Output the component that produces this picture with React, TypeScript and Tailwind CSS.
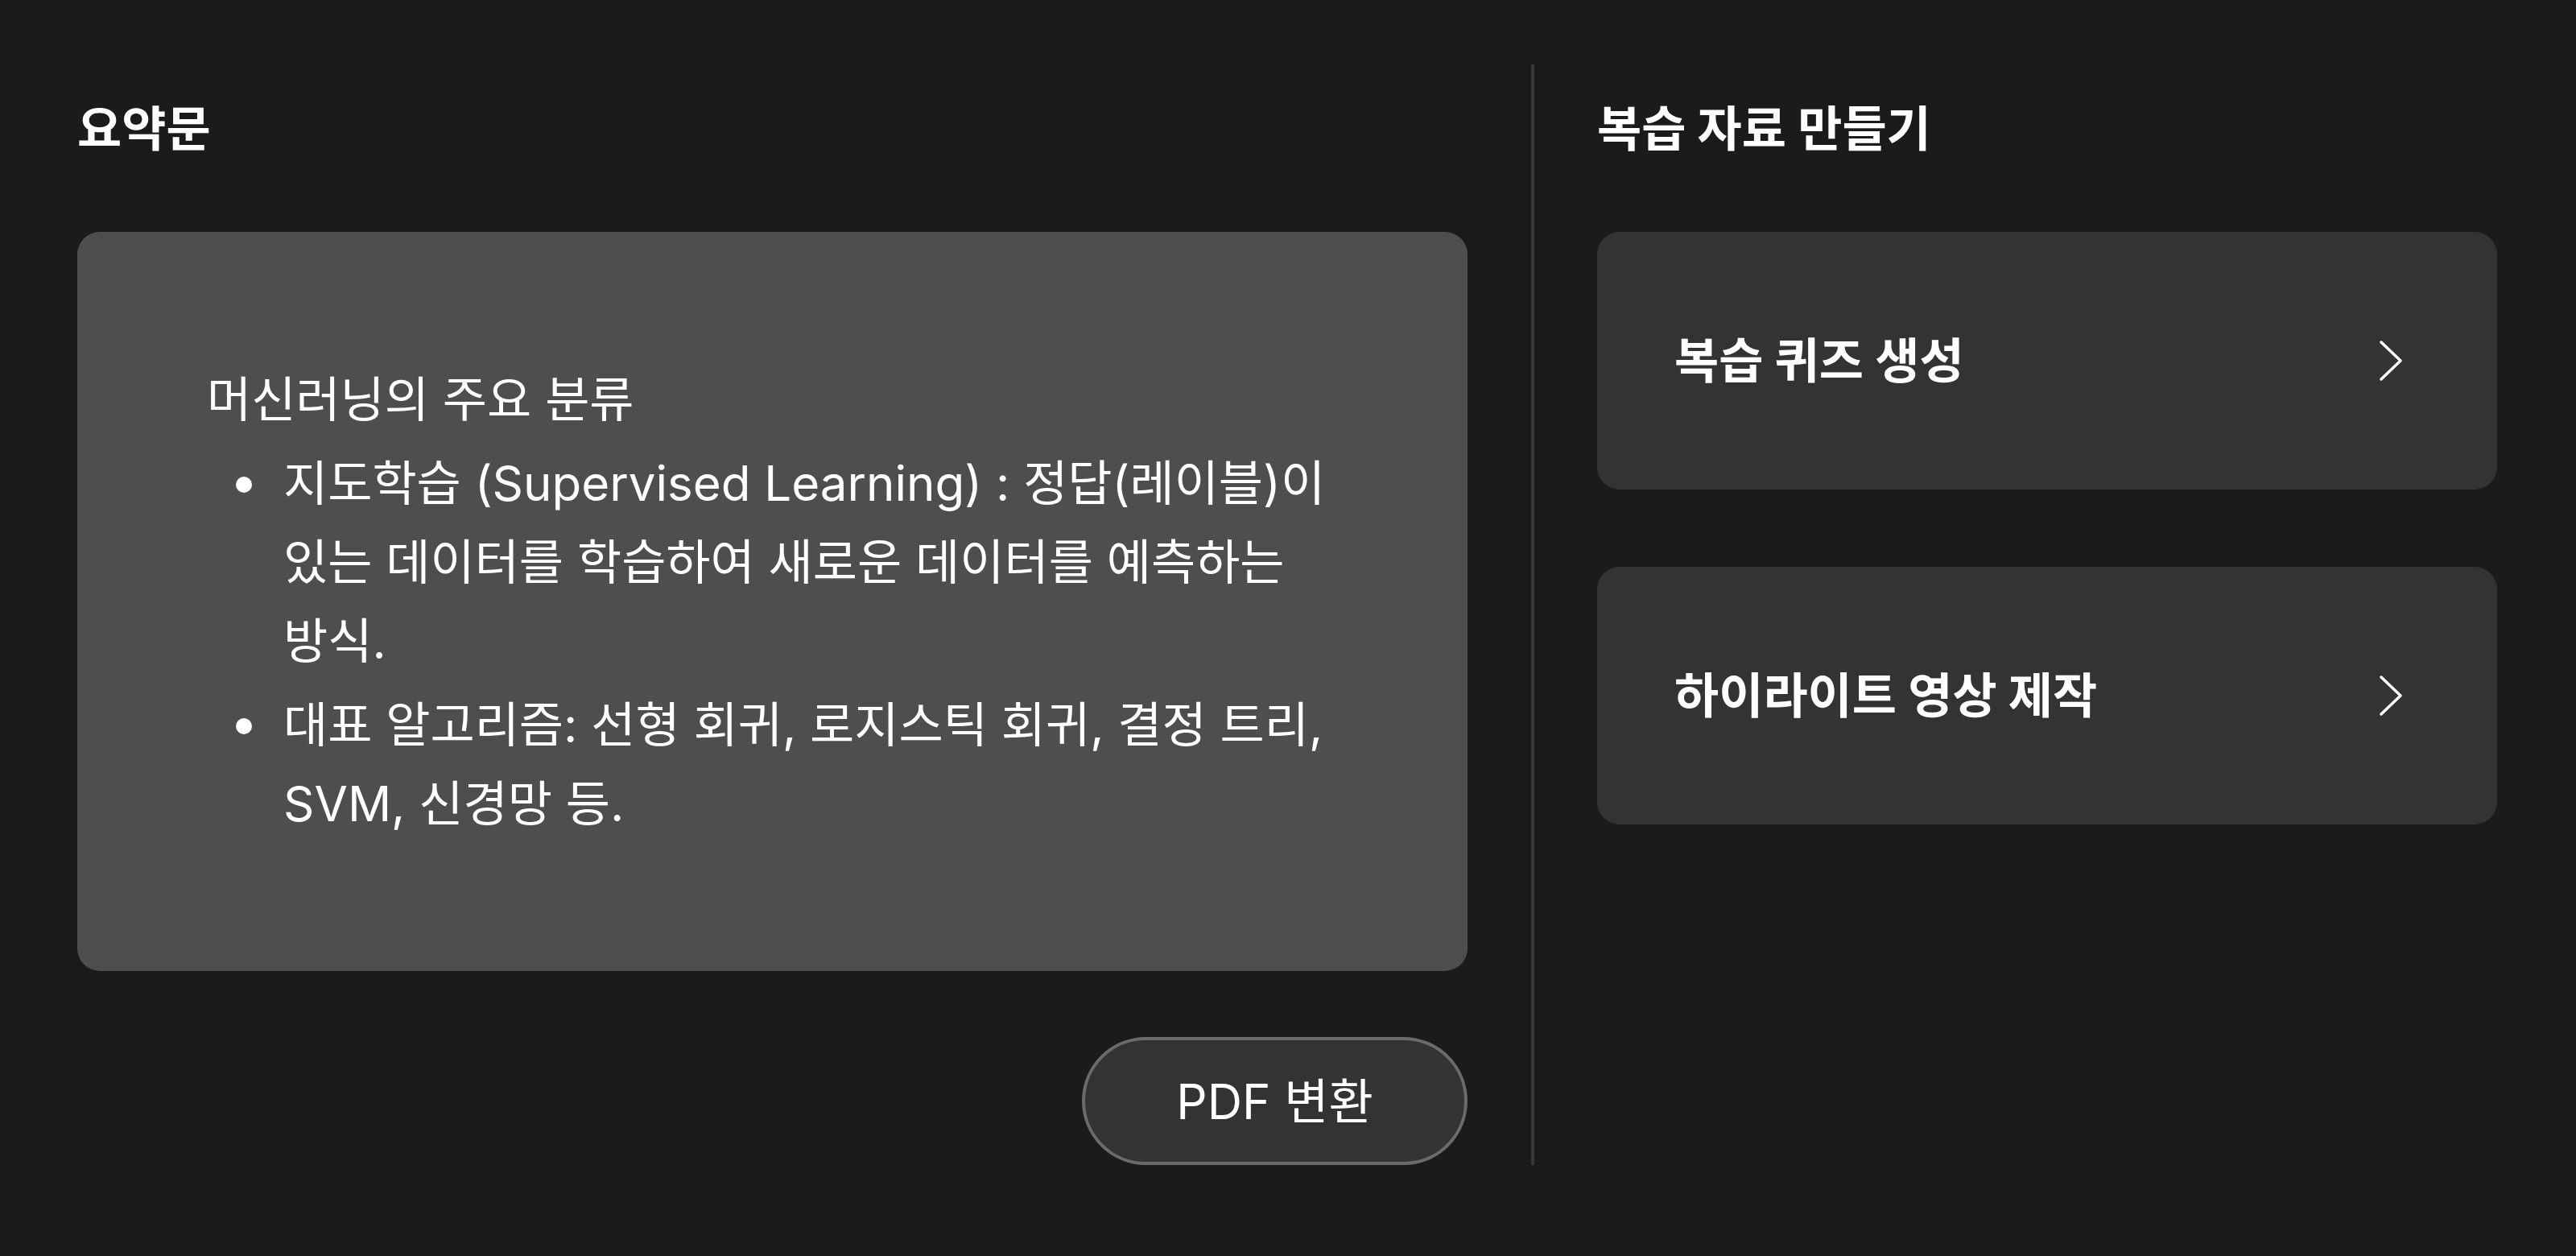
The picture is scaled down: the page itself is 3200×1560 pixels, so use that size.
import React from "react";

const FONT = "font-['Inter','Noto_Sans_CJK_KR',sans-serif]";

const ChevronRight = () => (
  <svg
    className="w-[32px] h-[52px] shrink-0"
    viewBox="0 0 32 52"
    fill="none"
    stroke="white"
    strokeWidth={3.5}
    strokeLinecap="round"
    strokeLinejoin="round"
  >
    <path d="M4 3 L28 26 L4 49" />
  </svg>
);

const ReviewCard = ({ label }: { label: string }) => (
  <button className="flex items-center justify-between h-[320px] w-full rounded-[28px] bg-[#333333] pl-[96px] pr-[116px] text-left">
    <span className="text-[60px] font-bold text-white leading-none">{label}</span>
    <ChevronRight />
  </button>
);

const summary = [
  "지도학습 (Supervised Learning) : 정답(레이블)이 있는 데이터를 학습하여 새로운 데이터를 예측하는 방식.",
  "대표 알고리즘: 선형 회귀, 로지스틱 회귀, 결정 트리, SVM, 신경망 등.",
];

export default function App() {
  return (
    <div className={`${FONT} min-h-[1560px] w-[3200px] bg-[#1b1b1b] text-white`}>
      <div className="flex pt-[80px] pl-[96px]">
        {/* 요약문 */}
        <section className="flex flex-col w-[1727px]">
          <div className="h-[160px] flex items-center">
            <h2 className="text-[60px] font-bold leading-none">요약문</h2>
          </div>
          <div className="mt-[48px] h-[918px] flex items-center rounded-[28px] bg-[#4e4e4e] pl-[161px] pr-[120px]">
            <div className="text-[60px] leading-[98px] font-normal break-keep">
              <p>머신러닝의 주요 분류</p>
              <ul>
                {summary.map((item, index) => (
                  <li key={index} className="flex mt-[6px]">
                    <span className="w-[95px] shrink-0 flex items-start">
                      <span className="mt-[41px] ml-[36px] w-[20px] h-[20px] rounded-full bg-white" />
                    </span>
                    <span>{item}</span>
                  </li>
                ))}
              </ul>
            </div>
          </div>
          <div className="mt-[82px] flex justify-end">
            <button className="w-[479px] h-[159px] rounded-full border-[4px] border-[#6b6b6b] bg-[#333333] text-[60px] text-white">
              PDF 변환
            </button>
          </div>
        </section>

        <div className="ml-[79px] mr-[78px] w-[4px] bg-[#383838]" />

        {/* 복습 자료 */}
        <section className="flex flex-col w-[1118px]">
          <div className="h-[160px] flex items-center">
            <h2 className="text-[60px] font-bold leading-none">복습 자료 만들기</h2>
          </div>
          <div className="mt-[48px] flex flex-col gap-[96px]">
            <ReviewCard label="복습 퀴즈 생성" />
            <ReviewCard label="하이라이트 영상 제작" />
          </div>
        </section>
      </div>
    </div>
  );
}
